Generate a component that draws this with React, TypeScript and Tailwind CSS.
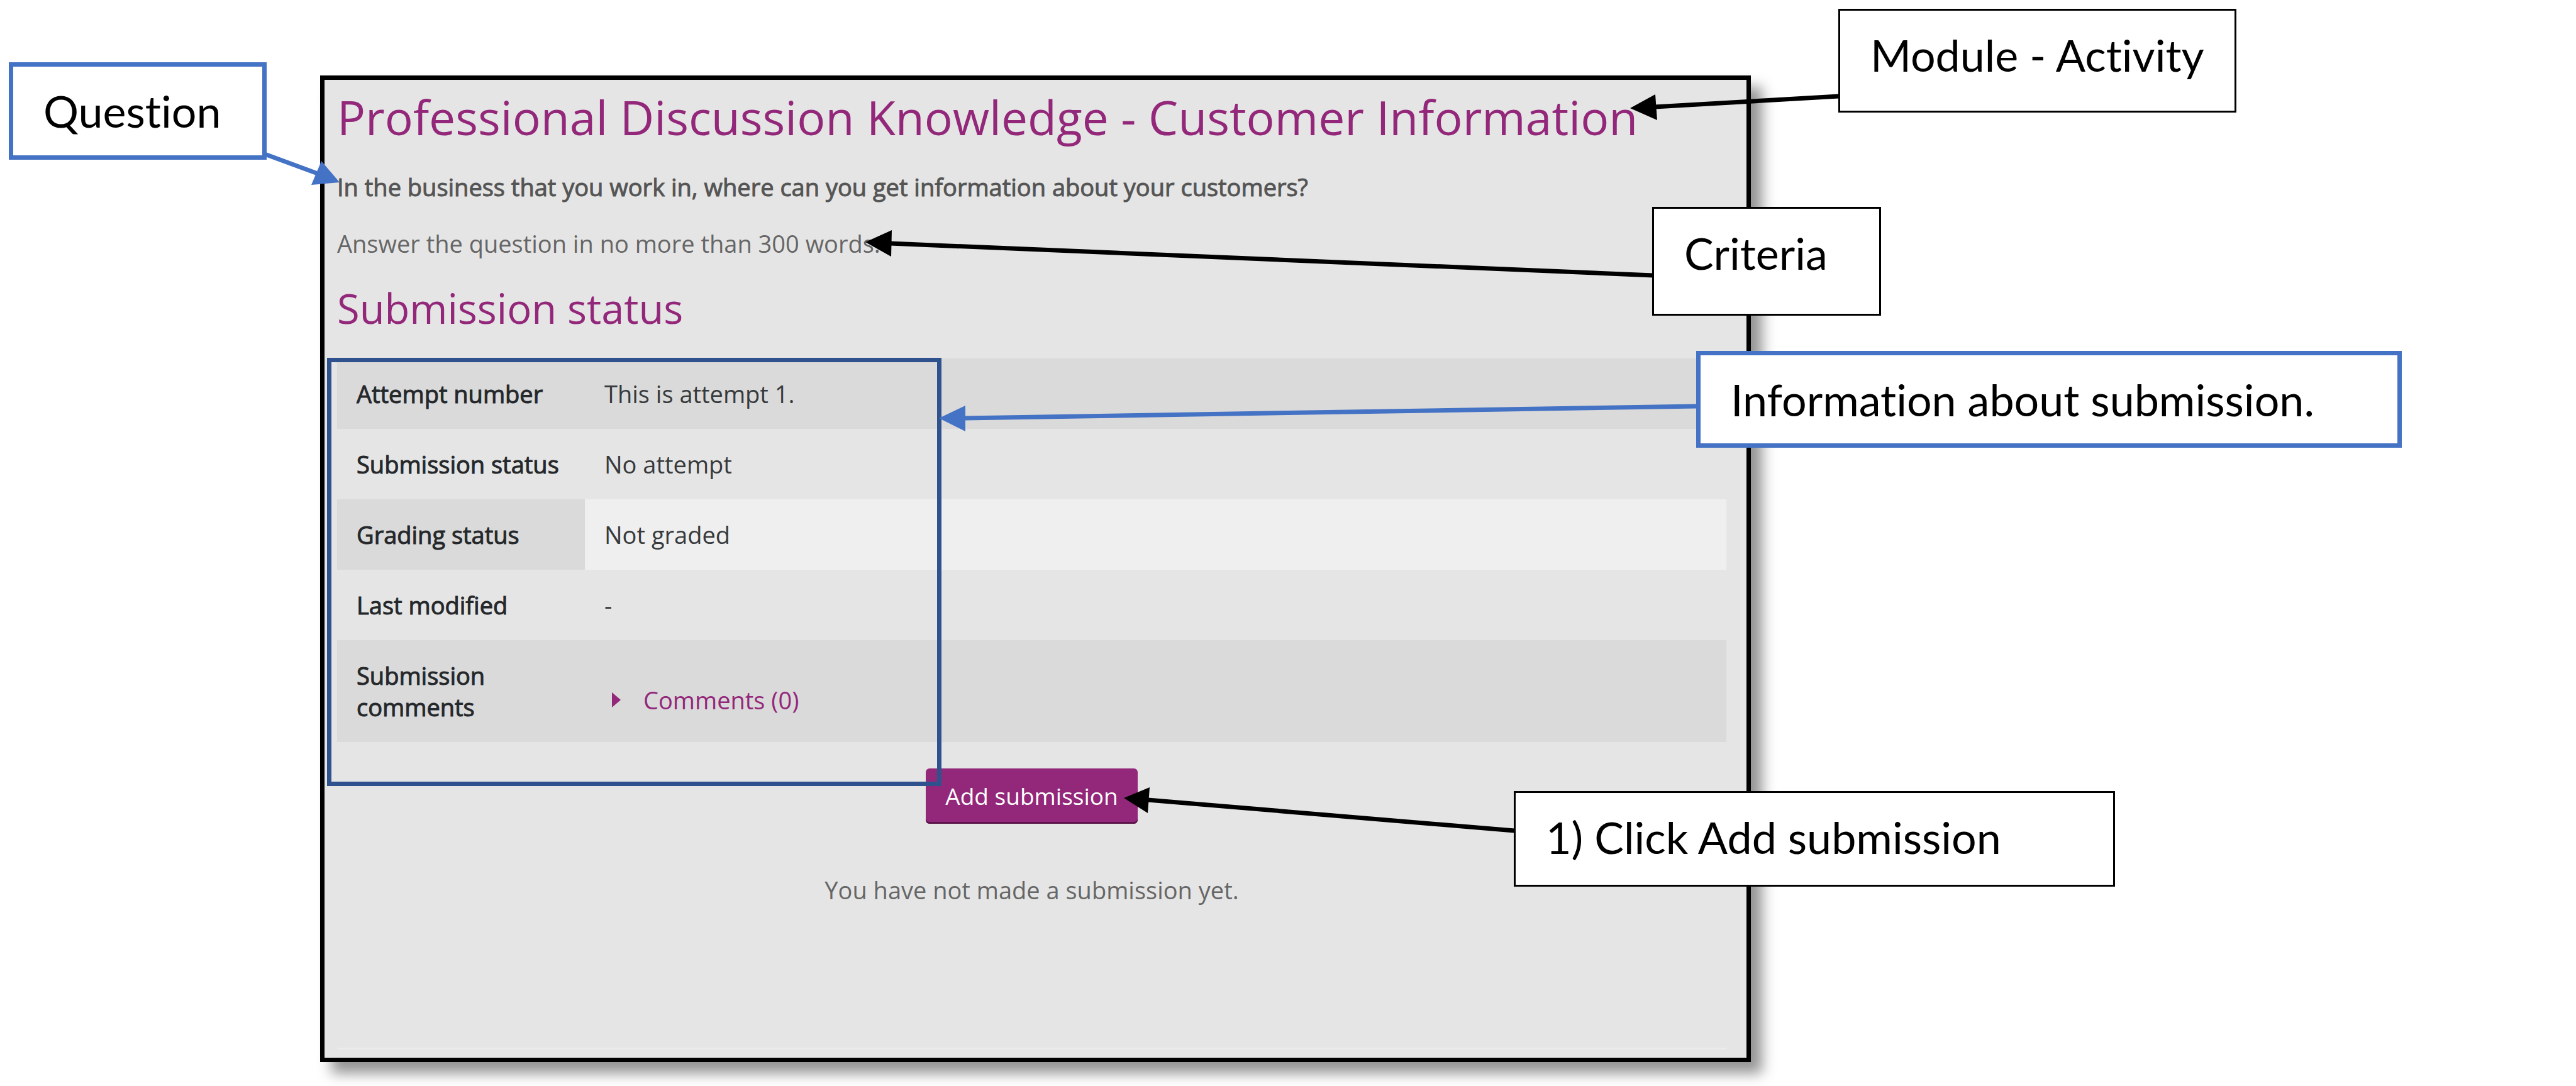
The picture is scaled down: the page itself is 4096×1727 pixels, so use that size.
import type { ReactNode } from "react";

const rows: { label: string; value: ReactNode; head: string; cell: string }[] = [
  { label: "Attempt number", value: "This is attempt 1.", head: "bg-[#dadada]", cell: "bg-[#dadada]" },
  { label: "Submission status", value: "No attempt", head: "bg-[#e5e5e5]", cell: "bg-[#e5e5e5]" },
  { label: "Grading status", value: "Not graded", head: "bg-[#dadada]", cell: "bg-[#efefef]" },
  { label: "Last modified", value: "-", head: "bg-[#e5e5e5]", cell: "bg-[#e5e5e5]" },
  { label: "Submission comments", value: <CommentsLink />, head: "bg-[#dadada]", cell: "bg-[#dadada]" },
];

function CommentsLink() {
  return (
    <a href="#comments" className="flex items-center pt-[39px] pl-3 text-[#93277a]">
      <svg viewBox="0 0 14 24" className="mr-9 h-6 w-3.5" aria-hidden="true">
        <path d="M0 0 L14 12 L0 24 Z" fill="currentColor" />
      </svg>
      Comments (0)
    </a>
  );
}

function Callout({ className, children }: { className: string; children: ReactNode }) {
  return (
    <p
      className={`absolute bg-white pt-[30px] pl-12 font-['Lato',sans-serif] text-[70px] leading-[80px] whitespace-nowrap text-black [font-variant-ligatures:none] ${className}`}
    >
      {children}
    </p>
  );
}

function Arrows() {
  return (
    <svg className="absolute top-0 left-0 h-[1727px] w-[4096px]" viewBox="0 0 4096 1727" aria-hidden="true">
      <g fill="#4472c4" stroke="none">
        <path d="M421 245 L505 276" stroke="#4472c4" strokeWidth="7" />
        <path d="M540 290 L511 256 L495 294 Z" />
        <path d="M2698 646 L1533 665" stroke="#4472c4" strokeWidth="7" />
        <path d="M1493 665 L1535 645 L1535 686 Z" />
      </g>
      <g fill="#000" stroke="none">
        <path d="M2924 153 L2631 170" stroke="#000" strokeWidth="7" />
        <path d="M2592 172 L2632 150 L2635 191 Z" />
        <path d="M2629 438 L1415 387" stroke="#000" strokeWidth="7" />
        <path d="M1376 385 L1418 366 L1417 408 Z" />
        <path d="M2408 1321 L1825 1272" stroke="#000" strokeWidth="7" />
        <path d="M1787 1269 L1828 1252 L1825 1293 Z" />
      </g>
    </svg>
  );
}

export default function App() {
  return (
    <div className="relative min-h-screen overflow-hidden bg-white pt-[120px] font-['Open_Sans',sans-serif] text-[38px] leading-[50px]">
      <main className="mr-[1312px] ml-[509px] flex flex-col border-[7px] border-black bg-[#e5e5e5] pt-[11px] pr-8 pb-[13px] pl-5 shadow-[18px_18px_20px_rgba(0,0,0,0.42)]">
        <h1 className="text-[75px] leading-[96px] whitespace-nowrap text-[#93277a]">
          Professional Discussion Knowledge - Customer Information
        </h1>
        <p className="mt-[38px] text-[#555] [-webkit-text-stroke:1px_currentColor]">
          In the business that you work in, where can you get information about your customers?
        </p>
        <p className="mt-10 text-[#666]">Answer the question in no more than 300 words.</p>
        <h2 className="mt-[38px] text-[65px] leading-[80px] text-[#93277a]">Submission status</h2>
        <table className="mt-10 w-full table-fixed border-collapse text-left align-top">
          <tbody>
            {rows.map((row) => (
              <tr key={row.label}>
                <th
                  scope="row"
                  className={`w-[394px] py-[31px] pl-[31px] align-top font-normal text-[#25282b] [-webkit-text-stroke:1px_currentColor] ${row.head}`}
                >
                  {row.label}
                </th>
                <td className={`px-[31px] py-[31px] align-top text-[#373a3c] ${row.cell}`}>{row.value}</td>
              </tr>
            ))}
          </tbody>
        </table>
        <button
          type="button"
          className="mt-[42px] self-center rounded-md bg-[#93277a] px-[31px] py-[19px] text-[37px] leading-[50px] text-white shadow-[inset_0_-3px_0_#5c164b]"
        >
          Add submission
        </button>
        <p className="mt-20 self-center text-[#666]">You have not made a submission yet.</p>
        <hr className="mt-[226px] border-t-3 border-[#ebebeb]" />
      </main>

      <div className="absolute top-[569px] left-[520px] h-[681px] w-[977px] border-[7px] border-[#2f528f]" />
      <Arrows />
      <Callout className="top-[99px] left-[14px] h-[155px] w-[410px] border-[7px] border-[#4472c4]">
        Question
      </Callout>
      <Callout className="top-[14px] left-[2923px] h-[165px] w-[633px] border-[3px] border-black">
        Module - Activity
      </Callout>
      <Callout className="top-[329px] left-[2627px] h-[173px] w-[364px] border-[3px] border-black">
        Criteria
      </Callout>
      <Callout className="top-[558px] left-[2697px] h-[154px] w-[1122px] border-[7px] border-[#4472c4]">
        Information about submission.
      </Callout>
      <Callout className="top-[1258px] left-[2407px] h-[152px] w-[956px] border-[3px] border-black">
        1) Click Add submission
      </Callout>
    </div>
  );
}
